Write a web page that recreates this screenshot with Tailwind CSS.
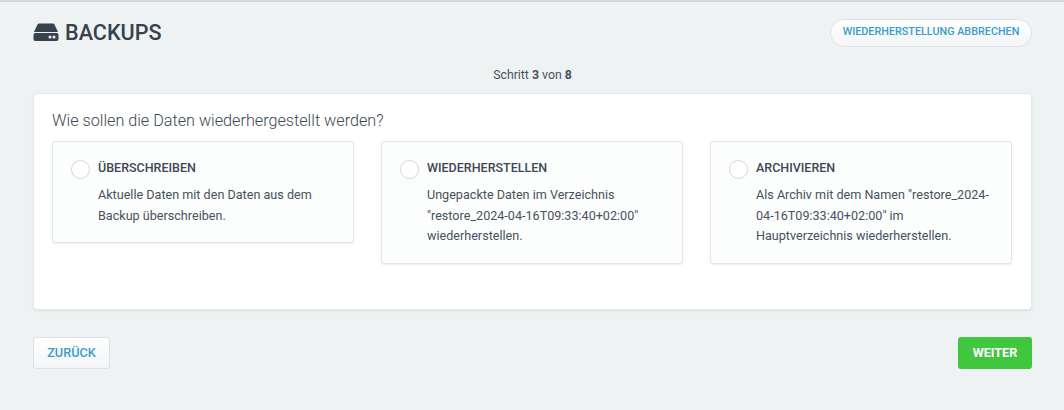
<!DOCTYPE html>
<html lang="de">
<head>
    <meta charset="UTF-8">
    <title>Backups</title>
    <script src="https://cdn.jsdelivr.net/npm/@tailwindcss/browser@4"></script>
</head>
<body class="bg-[#eff2f3] font-['Roboto',sans-serif] text-[#3d4852] h-[410px] overflow-hidden">
    <div class="h-[2px] bg-[#d5d7d9]"></div>

    <div class="pl-[33px] pr-[32px]">
        <!-- Kopfzeile -->
        <header class="flex items-center justify-between pt-[15px] h-[46px]">
            <h1 class="flex items-center gap-[6px] text-[21.600px] font-medium text-[#37424d] leading-[28px]">
                <svg class="w-[26px] h-[19px]" viewBox="0 0 26 19" fill="#37424d">
                    <path d="M6.5 0.5h13c1 0 1.7.5 2.1 1.3L25 9H1l3.4-7.2C4.8 1 5.500.5 6.500.5z"/>
                    <path fill-rule="evenodd" d="M2.500 10h21c1.200 0 2 .8 2 2v4c0 1.200-.8 2-2 2h-21c-1.200 0-2-.8-2-2v-4c0-1.200.8-2 2-2zM17 12.500a1.500 1.500 0 1 0 0 3 1.500 1.500 0 0 0 0-3zm4 0a1.500 1.500 0 1 0 0 3 1.500 1.500 0 0 0 0-3z"/>
                </svg>
                BACKUPS
            </h1>
            <button class="h-[28px] w-[202px] rounded-full border border-[#e0e3e6] bg-gradient-to-b from-white to-[#f3f5f7] text-[10.800px] font-medium text-[#3a9ccb]">WIEDERHERSTELLUNG ABBRECHEN</button>
        </header>

        <p class="mt-[18px] text-center text-[12.300px] leading-[18px] text-[#47525c]">Schritt <b class="font-bold">3</b> von <b class="font-bold">8</b></p>

        <!-- Auswahl -->
        <main class="mt-[9px] h-[217px] bg-white rounded-[4px] border border-[#e6e8ea] shadow-[0_1px_2px_rgba(0,0,0,0.08)] pl-[18px] pr-[19px] pt-[16px]">
            <h2 class="text-[16.200px] leading-[22px] font-light text-[#3d4852]">Wie sollen die Daten wiederhergestellt werden?</h2>
            <div class="grid grid-cols-3 gap-[27px] items-start mt-[9px]">
                <div class="flex gap-[8px] bg-[#fcfdfd] rounded-[3px] border border-[#e3e6e8] shadow-[0_1px_2px_rgba(0,0,0,0.08)] pl-[18px] pr-[12px] pt-[15px] pb-[16px]">
                    <span class="shrink-0 w-[19px] h-[19px] mt-[3px] rounded-full border border-[#d3d7de] bg-white"></span>
                    <div>
                        <h3 class="text-[12.500px] leading-[22px] font-medium text-[#3d4852]">ÜBERSCHREIBEN</h3>
                        <p class="mt-[6px] text-[12.600px] leading-[20.500px] text-[#47525c]">Aktuelle Daten mit den Daten aus dem Backup überschreiben.</p>
                    </div>
                </div>
                <div class="flex gap-[8px] bg-[#fcfdfd] rounded-[3px] border border-[#e3e6e8] shadow-[0_1px_2px_rgba(0,0,0,0.08)] pl-[18px] pr-[12px] pt-[15px] pb-[16px]">
                    <span class="shrink-0 w-[19px] h-[19px] mt-[3px] rounded-full border border-[#d3d7de] bg-white"></span>
                    <div>
                        <h3 class="text-[12.500px] leading-[22px] font-medium text-[#3d4852]">WIEDERHERSTELLEN</h3>
                        <p class="mt-[6px] text-[12.600px] leading-[20.500px] text-[#47525c]">Ungepackte Daten im Verzeichnis "restore_2024-04-16T09:33:40+02:00" wiederherstellen.</p>
                    </div>
                </div>
                <div class="flex gap-[8px] bg-[#fcfdfd] rounded-[3px] border border-[#e3e6e8] shadow-[0_1px_2px_rgba(0,0,0,0.08)] pl-[18px] pr-[12px] pt-[15px] pb-[16px]">
                    <span class="shrink-0 w-[19px] h-[19px] mt-[3px] rounded-full border border-[#d3d7de] bg-white"></span>
                    <div>
                        <h3 class="text-[12.500px] leading-[22px] font-medium text-[#3d4852]">ARCHIVIEREN</h3>
                        <p class="mt-[6px] text-[12.600px] leading-[20.500px] text-[#47525c]">Als Archiv mit dem Namen "restore_2024-04-16T09:33:40+02:00" im Hauptverzeichnis wiederherstellen.</p>
                    </div>
                </div>
            </div>
        </main>

        <!-- Navigation -->
        <footer class="flex items-center justify-between mt-[27px]">
            <button class="h-[32px] w-[77px] rounded-[3px] border border-[#dfe2e5] bg-gradient-to-b from-white to-[#f3f5f7] text-[12.700px] font-medium text-[#3a9ccb]">ZURÜCK</button>
            <button class="h-[32px] w-[74px] rounded-[3px] bg-[#41c640] text-[12.600px] font-bold text-white">WEITER</button>
        </footer>
    </div>
</body>
</html>
